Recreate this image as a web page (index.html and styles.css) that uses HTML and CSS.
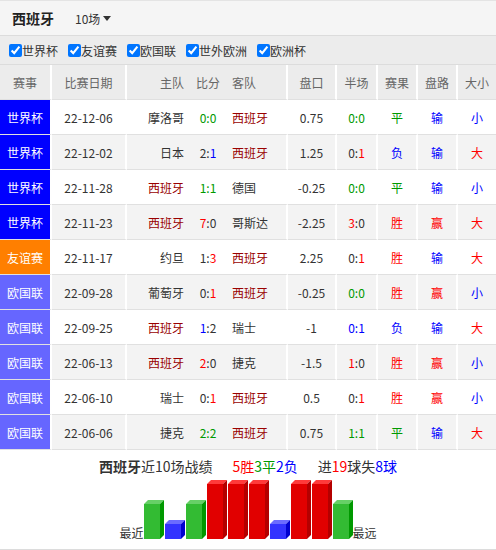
FILE: index.html
```html
<!DOCTYPE html>
<html lang="zh-CN">
<head>
<meta charset="utf-8">
<title>西班牙</title>
<link rel="stylesheet" href="styles.css">
</head>
<body>
<div class="page">
  <div class="topbar">
    <span class="title">西班牙</span>
    <span class="count">10场<i class="caret"></i></span>
  </div>
  <div class="filters">
    <label class="chk"><input type="checkbox" checked>世界杯</label>
    <label class="chk"><input type="checkbox" checked>友谊赛</label>
    <label class="chk"><input type="checkbox" checked>欧国联</label>
    <label class="chk"><input type="checkbox" checked>世外欧洲</label>
    <label class="chk"><input type="checkbox" checked>欧洲杯</label>
  </div>
  <div class="table">
    <div class="row head">
      <div class="c lg">赛事</div><div class="c sep">比赛日期</div><div class="c home">主队</div><div class="c score">比分</div><div class="c away sep">客队</div><div class="c sep">盘口</div><div class="c sep">半场</div><div class="c sep">赛果</div><div class="c sep">盘路</div><div class="c">大小</div>
    </div>
    <div class="row">
      <div class="c lg wc">世界杯</div><div class="c sep">22-12-06</div><div class="c home">摩洛哥</div><div class="c score g">0:0</div><div class="c away sep sp">西班牙</div><div class="c sep">0.75</div><div class="c sep g">0:0</div><div class="c sep g">平</div><div class="c sep b">输</div><div class="c b">小</div>
    </div>
    <div class="row alt">
      <div class="c lg wc">世界杯</div><div class="c sep">22-12-02</div><div class="c home">日本</div><div class="c score">2:<span class="b">1</span></div><div class="c away sep sp">西班牙</div><div class="c sep">1.25</div><div class="c sep">0:<span class="r">1</span></div><div class="c sep b">负</div><div class="c sep b">输</div><div class="c r">大</div>
    </div>
    <div class="row">
      <div class="c lg wc">世界杯</div><div class="c sep">22-11-28</div><div class="c home sp">西班牙</div><div class="c score g">1:1</div><div class="c away sep">德国</div><div class="c sep">-0.25</div><div class="c sep g">0:0</div><div class="c sep g">平</div><div class="c sep b">输</div><div class="c b">小</div>
    </div>
    <div class="row alt">
      <div class="c lg wc">世界杯</div><div class="c sep">22-11-23</div><div class="c home sp">西班牙</div><div class="c score"><span class="r">7</span>:0</div><div class="c away sep">哥斯达</div><div class="c sep">-2.25</div><div class="c sep"><span class="r">3</span>:0</div><div class="c sep r">胜</div><div class="c sep r">赢</div><div class="c r">大</div>
    </div>
    <div class="row">
      <div class="c lg fr">友谊赛</div><div class="c sep">22-11-17</div><div class="c home">约旦</div><div class="c score">1:<span class="r">3</span></div><div class="c away sep sp">西班牙</div><div class="c sep">2.25</div><div class="c sep">0:<span class="r">1</span></div><div class="c sep r">胜</div><div class="c sep b">输</div><div class="c r">大</div>
    </div>
    <div class="row alt">
      <div class="c lg nl">欧国联</div><div class="c sep">22-09-28</div><div class="c home">葡萄牙</div><div class="c score">0:<span class="r">1</span></div><div class="c away sep sp">西班牙</div><div class="c sep">-0.25</div><div class="c sep g">0:0</div><div class="c sep r">胜</div><div class="c sep r">赢</div><div class="c b">小</div>
    </div>
    <div class="row">
      <div class="c lg nl">欧国联</div><div class="c sep">22-09-25</div><div class="c home sp">西班牙</div><div class="c score"><span class="b">1</span>:2</div><div class="c away sep">瑞士</div><div class="c sep">-1</div><div class="c sep b">0:1</div><div class="c sep b">负</div><div class="c sep b">输</div><div class="c r">大</div>
    </div>
    <div class="row alt">
      <div class="c lg nl">欧国联</div><div class="c sep">22-06-13</div><div class="c home sp">西班牙</div><div class="c score"><span class="r">2</span>:0</div><div class="c away sep">捷克</div><div class="c sep">-1.5</div><div class="c sep"><span class="r">1</span>:0</div><div class="c sep r">胜</div><div class="c sep r">赢</div><div class="c b">小</div>
    </div>
    <div class="row">
      <div class="c lg nl">欧国联</div><div class="c sep">22-06-10</div><div class="c home">瑞士</div><div class="c score">0:<span class="r">1</span></div><div class="c away sep sp">西班牙</div><div class="c sep">0.5</div><div class="c sep">0:<span class="r">1</span></div><div class="c sep r">胜</div><div class="c sep r">赢</div><div class="c b">小</div>
    </div>
    <div class="row alt">
      <div class="c lg nl">欧国联</div><div class="c sep">22-06-06</div><div class="c home">捷克</div><div class="c score g">2:2</div><div class="c away sep sp">西班牙</div><div class="c sep">0.75</div><div class="c sep g">1:1</div><div class="c sep g">平</div><div class="c sep b">输</div><div class="c r">大</div>
    </div>
  </div>
  <div class="summary">
    <div class="stats">
      <span><b class="team">西班牙</b>近10场战绩</span>
      <span><em class="r">5胜</em><em class="g">3平</em><em class="b">2负</em></span>
      <span>进<em class="r">19</em>球失<em class="b">8球</em></span>
    </div>
    <div class="chart">
      <span class="edge">最近</span>
      <svg class="bars" width="209" height="60" viewBox="0 0 209 60">
        <g class="draw"><rect x="0" y="24" width="16" height="35"/><polygon class="top" points="0,24 4,20 20,20 16,24"/><polygon class="side" points="16,24 20,20 20,55 16,59"/></g>
        <g class="loss"><rect x="21" y="44" width="16" height="15"/><polygon class="top" points="21,44 25,40 41,40 37,44"/><polygon class="side" points="37,44 41,40 41,55 37,59"/></g>
        <g class="draw"><rect x="42" y="24" width="16" height="35"/><polygon class="top" points="42,24 46,20 62,20 58,24"/><polygon class="side" points="58,24 62,20 62,55 58,59"/></g>
        <g class="win"><rect x="63" y="4" width="16" height="55"/><polygon class="top" points="63,4 67,0 83,0 79,4"/><polygon class="side" points="79,4 83,0 83,55 79,59"/></g>
        <g class="win"><rect x="84" y="4" width="16" height="55"/><polygon class="top" points="84,4 88,0 104,0 100,4"/><polygon class="side" points="100,4 104,0 104,55 100,59"/></g>
        <g class="win"><rect x="105" y="4" width="16" height="55"/><polygon class="top" points="105,4 109,0 125,0 121,4"/><polygon class="side" points="121,4 125,0 125,55 121,59"/></g>
        <g class="loss"><rect x="126" y="44" width="16" height="15"/><polygon class="top" points="126,44 130,40 146,40 142,44"/><polygon class="side" points="142,44 146,40 146,55 142,59"/></g>
        <g class="win"><rect x="147" y="4" width="16" height="55"/><polygon class="top" points="147,4 151,0 167,0 163,4"/><polygon class="side" points="163,4 167,0 167,55 163,59"/></g>
        <g class="win"><rect x="168" y="4" width="16" height="55"/><polygon class="top" points="168,4 172,0 188,0 184,4"/><polygon class="side" points="184,4 188,0 188,55 184,59"/></g>
        <g class="draw"><rect x="189" y="24" width="16" height="35"/><polygon class="top" points="189,24 193,20 209,20 205,24"/><polygon class="side" points="205,24 209,20 209,55 205,59"/></g>
      </svg>
      <span class="edge">最远</span>
    </div>
  </div>
</div>
</body>
</html>
```

FILE: styles.css
```css
* { box-sizing: border-box; }
html, body { margin: 0; padding: 0; background: #fff; }
body {
  font-family: "Noto Sans CJK SC", "Noto Sans", sans-serif;
  font-size: 12px;
  color: #333;
}
.page { width: 496px; }

.topbar {
  height: 36px;
  background: #f5f5f5;
  border-top: 1px solid #e4e4e4;
  border-bottom: 1px solid #dcdcdc;
  display: flex;
  align-items: center;
  padding-left: 12px;
}
.title { font-size: 14px; font-weight: bold; color: #222; width: 63px; }
.count { font-size: 12px; color: #333; display: flex; align-items: center; }
.caret {
  display: inline-block;
  margin-left: 3px;
  width: 0; height: 0;
  border-left: 4px solid transparent;
  border-right: 4px solid transparent;
  border-top: 5px solid #333;
}

.filters {
  height: 29px;
  background: #ececec;
  border-bottom: 1px solid #dcdcdc;
  display: flex;
  align-items: center;
  padding-left: 9px;
  gap: 10px;
}
.chk { display: flex; align-items: center; color: #333; }
.chk input { margin: 0; width: 13px; height: 13px; }

.row {
  display: grid;
  grid-template-columns: 52px 75px 63px 36px 62px 49px 41px 40px 40px 38px;
  height: 35px;
  background: #fff;
}
.row.alt { background: #f3f3f3; }
.row.head { background: #ececec; color: #666; }
.c {
  display: flex;
  align-items: center;
  justify-content: center;
  border-bottom: 1px solid #e0e0e0;
  white-space: nowrap;
}
.sep { border-right: 2px solid #fff; }
.lg { border-right: 2px solid #fff; }
.home { justify-content: flex-end; padding-right: 6px; }
.away { justify-content: flex-start; padding-left: 6px; }
.wc { background: #0000ff; color: #fff; }
.fr { background: #ff7f00; color: #fff; }
.nl { background: #6666ff; color: #fff; }
.head .lg { background: transparent; }

.sp { color: #990000; }
.r { color: #ff0000; }
.b { color: #0000ff; }
.g { color: #009900; }
em { font-style: normal; }

.summary {
  height: 100px;
  padding-top: 6px;
  border-bottom: 1px solid #dcdcdc;
}
.stats {
  display: flex;
  justify-content: center;
  gap: 20px;
  font-size: 14px;
  line-height: 20px;
  color: #333;
}
.team { font-weight: bold; }
.chart {
  margin-top: 4px;
  display: flex;
  justify-content: center;
  align-items: flex-end;
  height: 60px;
}
.edge { font-size: 12px; line-height: 14px; color: #333; }
.bars { display: block; }
.win rect { fill: #e10000; }
.win .top { fill: #ff3a3a; }
.win .side { fill: #b40000; }
.draw rect { fill: #33bb33; }
.draw .top { fill: #66d066; }
.draw .side { fill: #009900; }
.loss rect { fill: #3333ff; }
.loss .top { fill: #6b6bff; }
.loss .side { fill: #0000d0; }
```
